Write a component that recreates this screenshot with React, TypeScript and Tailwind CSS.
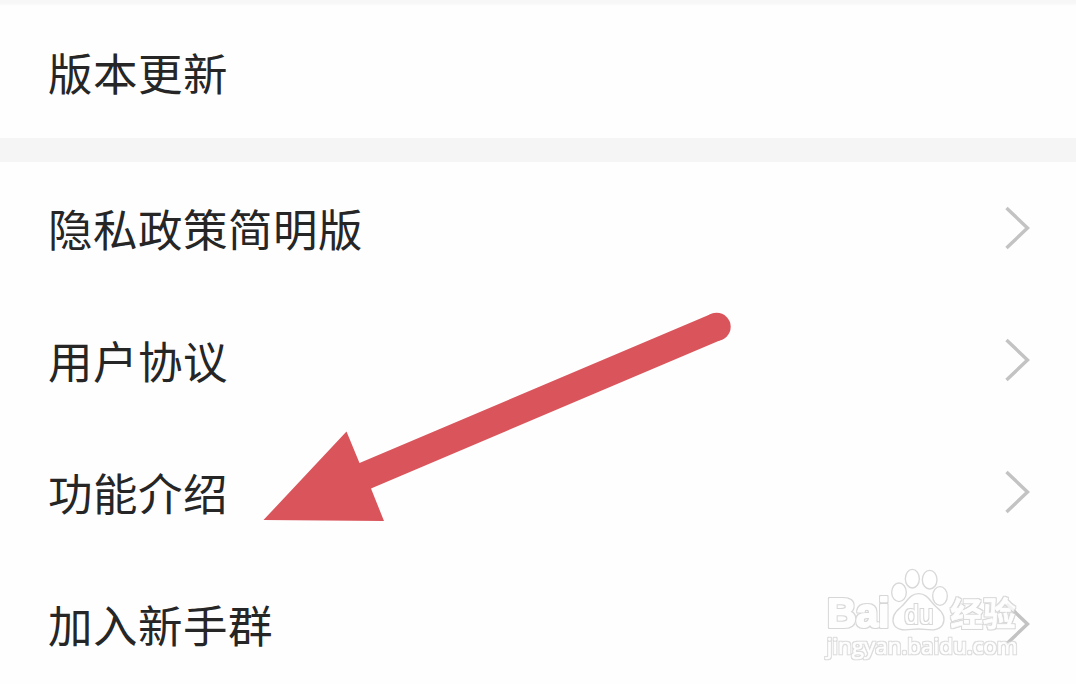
interface MenuRowProps {
  label: string;
}

const menuItems = ['隐私政策简明版', '用户协议', '功能介绍', '加入新手群'];

function Chevron() {
  return (
    <svg className="w-7 h-12" viewBox="0 0 28 48" fill="none" stroke="#c3c3c3" strokeWidth="3.4">
      <path d="M3.5 4 L24.5 24 L3.5 44" />
    </svg>
  );
}

function MenuRow({ label }: MenuRowProps) {
  return (
    <div className="h-[132px] shrink-0 flex items-center justify-between pl-12 pr-[45px]">
      <span className="text-[44.5px] leading-none tracking-[0.5px]">{label}</span>
      <Chevron />
    </div>
  );
}

function Arrow() {
  return (
    <svg className="absolute left-[250px] top-[300px] w-[490px] h-[230px]" viewBox="0 0 490 230">
      <path
        d="M13.5 220 L96.5 131.5 L109.5 163 L461 14 A14 14 0 0 1 472 39.5 L121 188.5 L134 221 Z"
        fill="#da555b"
      />
      <circle cx="466.7" cy="26.8" r="14" fill="#da555b" />
    </svg>
  );
}

function Watermark() {
  return (
    <svg
      className="absolute left-[810px] top-[560px] w-[240px] h-[110px]"
      viewBox="0 0 720 330"
      fill="#ffffff"
      stroke="#ffffff"
      strokeLinejoin="round"
    >
      <defs>
        {/* Thin grey rim around white shapes */}
        <filter id="rim" filterUnits="userSpaceOnUse" x="0" y="0" width="720" height="330" colorInterpolationFilters="sRGB">
          <feMorphology in="SourceAlpha" operator="dilate" radius="3" result="grown" />
          <feFlood floodColor="#cecece" />
          <feComposite in2="grown" operator="in" result="grey" />
          <feMerge>
            <feMergeNode in="grey" />
            <feMergeNode in="SourceGraphic" />
          </feMerge>
        </filter>
      </defs>

      {/* Paw */}
      <g fillOpacity="0.75" stroke="#d8d8d8" strokeWidth="4">
        <ellipse cx="267" cy="97" rx="22" ry="28" />
        <ellipse cx="307" cy="56" rx="21" ry="28" />
        <ellipse cx="359" cy="59" rx="22" ry="28" />
        <ellipse cx="390" cy="108" rx="22" ry="28" />
        <path d="M326 101 C354 101 361 127 379 141 C398 156 408 174 398 194 C384 218 350 207 326 207 C300 207 270 218 253 196 C242 174 254 156 273 141 C291 127 298 101 326 101 Z" />
      </g>

      {/* Brand */}
      <g filter="url(#rim)" opacity="0.8" fontFamily="'Liberation Sans', Arial, sans-serif" fontWeight="700">
        <text x="52" y="201" fontSize="122" strokeWidth="6" textLength="186" lengthAdjust="spacingAndGlyphs">Bai</text>
        <text x="283" y="191" fontSize="84" strokeWidth="0.5" fontWeight="400" textLength="88" lengthAdjust="spacingAndGlyphs">du</text>
        <text x="421" y="197" fontSize="98" strokeWidth="2" fontFamily="'Noto Sans CJK SC', sans-serif">经验</text>
      </g>
      <g filter="url(#rim)" opacity="0.72">
        <text
          x="50"
          y="281"
          fontSize="66"
          fontFamily="'Open Sans', sans-serif"
          strokeWidth="2"
          textLength="573"
          lengthAdjust="spacingAndGlyphs"
        >
          jingyan.baidu.com
        </text>
      </g>
    </svg>
  );
}

export default function App() {
  return (
    <div className="relative w-[1076px] h-[684px] overflow-hidden flex flex-col bg-[#fefefe] text-[#262626] font-['Noto_Sans_CJK_SC',sans-serif]">
      <div className="h-1.5 shrink-0 bg-linear-to-b from-[#f7f7f7] from-50% to-[#fefefe]" />

      {/* Version */}
      <div className="h-[132px] shrink-0 flex items-center pl-12">
        <span className="text-[44.5px] leading-none tracking-[0.5px]">版本更新</span>
      </div>
      <div className="h-6 shrink-0 bg-[#f5f5f5]" />

      {/* Menu */}
      {menuItems.map((label) => (
        <MenuRow key={label} label={label} />
      ))}

      <Arrow />
      <Watermark />
    </div>
  );
}
